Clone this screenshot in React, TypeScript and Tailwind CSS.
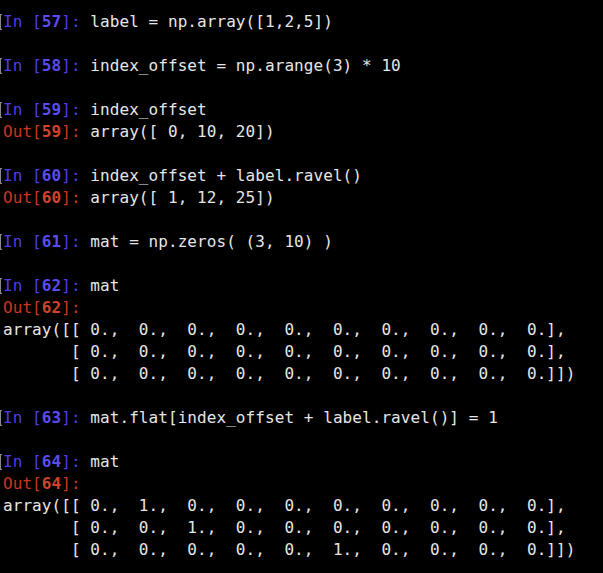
import React from "react";

type Line =
  | { kind: "in"; n: number; code: string }
  | { kind: "out"; n: number; code: string }
  | { kind: "text"; code: string }
  | { kind: "blank" };

const zeros1 = [
  "array([[ 0.,  0.,  0.,  0.,  0.,  0.,  0.,  0.,  0.,  0.],",
  "       [ 0.,  0.,  0.,  0.,  0.,  0.,  0.,  0.,  0.,  0.],",
  "       [ 0.,  0.,  0.,  0.,  0.,  0.,  0.,  0.,  0.,  0.]])",
];
const ones1 = [
  "array([[ 0.,  1.,  0.,  0.,  0.,  0.,  0.,  0.,  0.,  0.],",
  "       [ 0.,  0.,  1.,  0.,  0.,  0.,  0.,  0.,  0.,  0.],",
  "       [ 0.,  0.,  0.,  0.,  0.,  1.,  0.,  0.,  0.,  0.]])",
];

const lines: Line[] = [
  { kind: "in", n: 57, code: "label = np.array([1,2,5])" },
  { kind: "blank" },
  { kind: "in", n: 58, code: "index_offset = np.arange(3) * 10" },
  { kind: "blank" },
  { kind: "in", n: 59, code: "index_offset" },
  { kind: "out", n: 59, code: "array([ 0, 10, 20])" },
  { kind: "blank" },
  { kind: "in", n: 60, code: "index_offset + label.ravel()" },
  { kind: "out", n: 60, code: "array([ 1, 12, 25])" },
  { kind: "blank" },
  { kind: "in", n: 61, code: "mat = np.zeros( (3, 10) )" },
  { kind: "blank" },
  { kind: "in", n: 62, code: "mat" },
  { kind: "out", n: 62, code: "" },
  ...zeros1.map((c) => ({ kind: "text", code: c } as Line)),
  { kind: "blank" },
  { kind: "in", n: 63, code: "mat.flat[index_offset + label.ravel()] = 1" },
  { kind: "blank" },
  { kind: "in", n: 64, code: "mat" },
  { kind: "out", n: 64, code: "" },
  ...ones1.map((c) => ({ kind: "text", code: c } as Line)),
];

function Row({ line }: { line: Line }) {
  if (line.kind === "blank") return <div className="h-[22px]" />;
  return (
    <div className="flex h-[22px] items-center whitespace-pre">
      {line.kind === "in" ? (
        <span className="mr-px h-[16px] w-[2px] shrink-0 border-y border-l border-[#8a8a8a]" />
      ) : (
        <span className="mr-px w-[2px] shrink-0" />
      )}
      {line.kind === "in" && (
        <span className="text-[#4c3fe0]">
          In [<span className="font-bold text-[#5a4cf2]">{line.n}</span>]:{" "}
        </span>
      )}
      {line.kind === "out" && (
        <span className="text-[#c7391f]">
          Out[<span className="font-bold text-[#d2422a]">{line.n}</span>]:{" "}
        </span>
      )}
      <span className="text-[#e6e6e6]">{line.code}</span>
    </div>
  );
}

export default function App() {
  return (
    <div
      className="h-[573px] w-[603px] overflow-hidden bg-black pt-[11px] text-[16px] leading-[22px] tracking-[0.07px]"
      style={{ fontFamily: '"DejaVu Sans Mono", "Liberation Mono", monospace' }}
    >
      {lines.map((l, i) => (
        <Row key={i} line={l} />
      ))}
    </div>
  );
}
